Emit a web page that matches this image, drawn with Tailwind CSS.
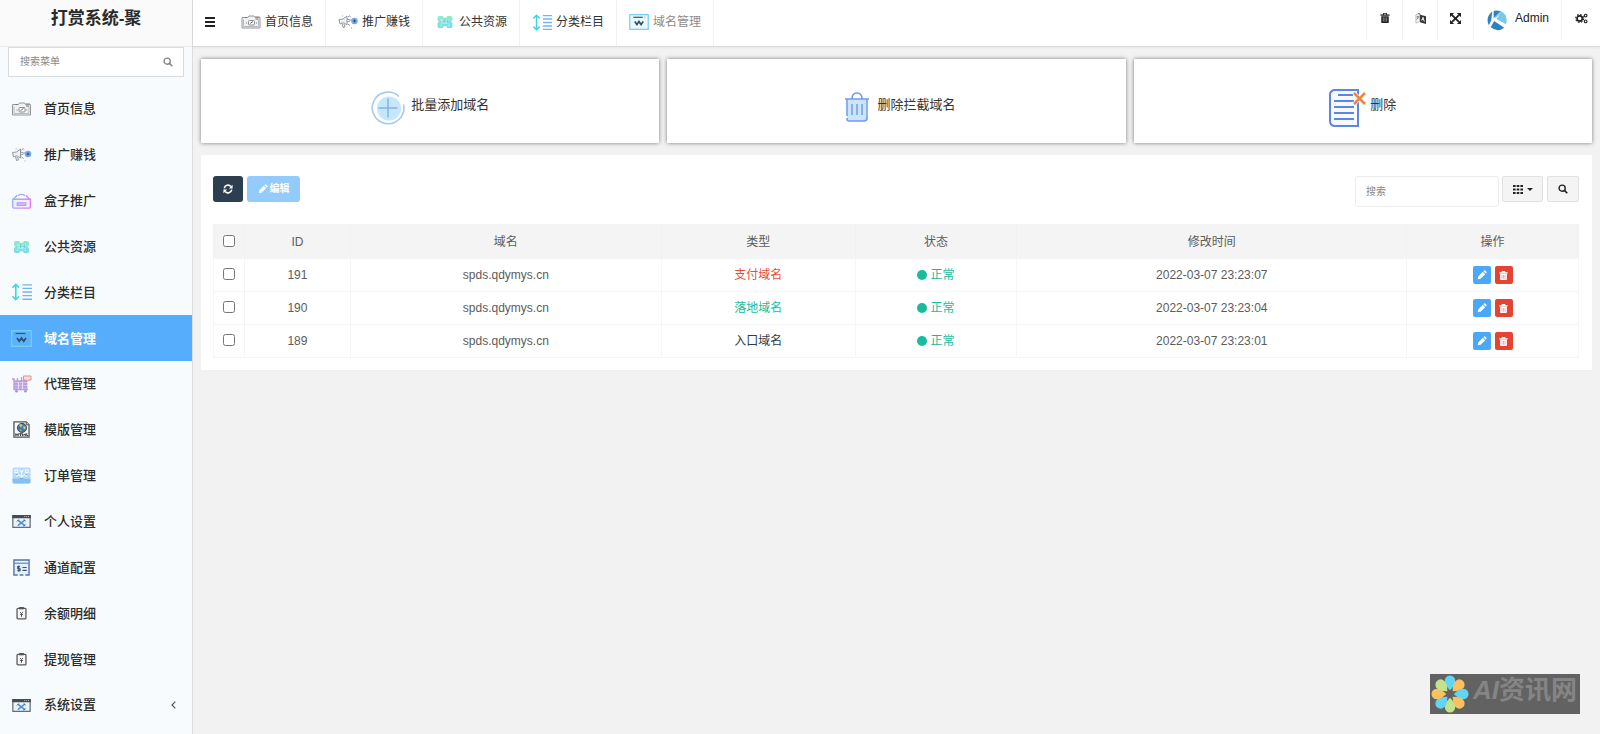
<!DOCTYPE html>
<html lang="zh-CN">
<head>
<meta charset="utf-8">
<meta name="viewport" content="width=device-width, initial-scale=1">
<title>打赏系统-聚</title>
<script src="https://cdn.jsdelivr.net/npm/@tailwindcss/browser@4"></script>
</head>
<body class="flex min-h-screen bg-[#f2f2f2] font-['Liberation_Sans','Noto_Sans_CJK_SC',sans-serif] text-xs text-[#333]">

<svg class="size-0 shrink-0" aria-hidden="true">
  <symbol id="i-home" viewBox="0 0 20 14">
    <path d="M1 2.500h6l1-1.500h5l1 1.500h5v10.500H1z" fill="#f1f1f2" stroke="#96989c"/>
    <path d="M2.500 4.500v7h15v-7M14 1.500h4.500" fill="none" stroke="#b9bbbf"/>
    <path d="M4 2.500h2M14.500 4h3" stroke="#6f7175"/>
    <rect x="7.500" y="5.500" width="6" height="4.500" rx="1" fill="#fff" stroke="#8b8d92"/>
    <path d="M9 8.500l3-2M5 8h.8M15 8h.8" stroke="#66686c"/>
  </symbol>
  <symbol id="i-promo" viewBox="0 0 20 16">
    <path d="M1 5.500l4-.5 4-3v9l-3-2H4l-2 1zM4 9.500l1 4 2-.5-1-3" fill="#eef0f2" stroke="#8b9199" stroke-width=".9"/>
    <path d="M9 5l3 1h3M9 8l3-1M10 3l2-1.500M10 10l2 1.500" fill="none" stroke="#8d949d"/>
    <circle cx="16.500" cy="7" r="3.300" fill="#7ba8ea"/>
    <path d="M15 7h3M16.500 5.500v3" stroke="#27539b"/>
    <path d="M4 2h1M13 14h1M12 3h1" stroke="#8fa7c9"/>
  </symbol>
  <linearGradient id="g-box" gradientUnits="userSpaceOnUse" x1="0" x2="22" y1="4" y2="16"><stop offset="0" stop-color="#86bdf8"/><stop offset=".6" stop-color="#c694f4"/><stop offset="1" stop-color="#ee72ec"/></linearGradient>
  <symbol id="i-box" viewBox="0 0 22 18">
    <path d="M1 7h20v8.500q0 1.500-1.500 1.500h-17Q1 17 1 15.500z" fill="#ece2fb" fill-opacity=".6" stroke="url(#g-box)" stroke-width="1.500"/>
    <path d="M2 7l4-4.500M20 7l-4-4.500M7 3q4-3 8 0" fill="none" stroke="url(#g-box)" stroke-width="1.500"/>
    <rect x="6" y="11" width="10" height="3" fill="#d5bbf6" stroke="#b692f1"/>
  </symbol>
  <linearGradient id="g-res" x1="0" x2="0" y1="0" y2="1"><stop offset="0" stop-color="#8eeccb"/><stop offset="1" stop-color="#7bd9ee"/></linearGradient>
  <symbol id="i-res" viewBox="0 0 18 15">
    <path d="M3 1h3.500l1 2h3l1-2H15q2 0 2 2v2.500L15.500 7 17 8.500V12q0 2-2 2h-3.500l-1-2h-3l-1 2H3q-2 0-2-2V8.500L2.500 7 1 5.500V3q0-2 2-2z" fill="url(#g-res)"/>
    <path d="M4 5.500h4M10 5.500h4M5 8.500h8M4 11h1.500M12.500 11H14" stroke="#d8fbf5"/>
    <path d="M8 4.500v4M12 4.500v4" stroke="#58cddb"/>
  </symbol>
  <symbol id="i-cat" viewBox="0 0 22 18">
    <path d="M5 1.500v15M1.500 4.500L5 1l3.500 3.500M1.500 13.500L5 17l3.500-3.500" fill="none" stroke="#3fd5e1" stroke-width="1.700"/>
    <path d="M12 1.500h10M12 5.200h10M12 9h10M12 12.800h10M12 16.500h10" stroke="#74b4ee" stroke-width="1.500"/>
  </symbol>
  <symbol id="i-domain" viewBox="0 0 21 17">
    <rect x=".7" y=".7" width="19.600" height="15.600" fill="#7ccdf5" fill-opacity=".16" stroke="#76cdf2" stroke-width="1.300"/>
    <path d="M4.500 3.500h10" stroke="#3a5877" stroke-width="1.300"/><path d="M16 3.500h1.500" stroke="#f08c70"/>
    <path d="M6 8l2.300 3.200L10.500 8l2.200 3.200L15 8" fill="none" stroke="#2d4c6d" stroke-width="1.700"/>
  </symbol>
  <symbol id="i-agent" viewBox="0 0 20 18">
    <rect x="3" y="6" width="12.500" height="8.500" fill="#cfbcec"/>
    <path d="M.5 4h2v10.500h14M3 6h13M3 9h13M3 12h13M6 3v3M10 2v4M13 4v2" fill="none" stroke="#b49bda" stroke-width="1.300"/>
    <path d="M7 7v7M11 7v7" stroke="#e9dff7"/>
    <circle cx="5" cy="16.300" r="1.300" fill="#a98fd2"/><circle cx="14" cy="16.300" r="1.300" fill="#a98fd2"/>
    <path d="M12 1h7.500v4H17l-1 1.500L15 5h-3z" fill="#fbdedd" stroke="#e08f94"/>
  </symbol>
  <symbol id="i-tpl" viewBox="0 0 18 18">
    <path d="M1 1h13l3 3v13H1z" fill="#f7f7f5" stroke="#55575a" stroke-width="1.400"/>
    <path d="M14 1v3h3" fill="#ddd" stroke="#55575a"/>
    <circle cx="9.500" cy="7.300" r="4.800" fill="#3e7cb8" stroke="#30404c"/>
    <path d="M6.500 4l2.500-1 1 2-2 2zM11 5l2.500 1-.5 3-2-1zM7 9l2 .5-.5 2z" fill="#e4c454"/>
    <path d="M3 13v3M5.500 13v3M3 14.500h2.500M6.500 13.500h3M8 13.500V16M10 16v-2.500l1.500 1.500 1.500-1.500V16M14.500 13v2.500h1.500" fill="none" stroke="#333"/>
  </symbol>
  <symbol id="i-order" viewBox="0 0 20 18">
    <rect x=".5" y=".5" width="19" height="17" rx="2" fill="#b3d9f8"/>
    <path d="M.5 12.500h19v3q0 2-2 2h-15q-2 0-2-2z" fill="#86c0f2"/>
    <path d="M3 3h3v3H3zM8 3l2 3 2-3M14 3h3v3h-3zM4 10l3-2 3 3 3-3 3 2M10 6v5" fill="none" stroke="#eff9ff" stroke-width="1.200"/>
    <path d="M4 8h2M14 8h2M8 12h4" stroke="#69abe6"/>
  </symbol>
  <symbol id="i-set" viewBox="0 0 20 14">
    <rect x=".7" y=".7" width="18.600" height="12.600" fill="#eaf3fb" stroke="#62676f" stroke-width="1.300"/>
    <path d="M0 0h20v3.500H0z" fill="#454a53"/><path d="M13 1.700h1M15 1.700h1M17 1.700h1" stroke="#ccc"/>
    <path d="M6 5.500l7.500 6M13.500 5.500l-7.500 6" stroke="#4e92d6" stroke-width="1.800"/>
    <path d="M5 7l2-2M12.500 5l2 1.500M12 12l2.500-1.500" stroke="#35699f"/>
  </symbol>
  <symbol id="i-chan" viewBox="0 0 18 18">
    <path d="M1 1h16v16H1z" fill="#e5f0fb"/><path d="M5 17H1V1h16v16h-4M7 17h4" fill="none" stroke="#5675a3" stroke-width="1.500"/>
    <path d="M1 4.500h16" stroke="#5e91cb" stroke-width="1.300"/>
    <path d="M7.500 8H5v2.300h2.500v2.200H4.500M6.200 7v6.500M10 9h4.500M10 12h4.500" fill="none" stroke="#36547e" stroke-width="1.200"/>
  </symbol>
  <symbol id="i-bal" viewBox="0 0 12 14">
    <rect x="1.200" y="1.500" width="9.600" height="11.300" rx="1" fill="#f4f4f4" stroke="#5a5a5a" stroke-width="1.400"/>
    <path d="M3.500 0h5v2.500h-5z" fill="#555"/><path d="M4.500 5.500L6 7l1.500-1.500M4.500 8h3M6 7v3.500" fill="none" stroke="#444"/>
  </symbol>
  <symbol id="i-search" viewBox="0 0 14 14"><circle cx="5.800" cy="5.800" r="4.300" fill="none" stroke="currentColor" stroke-width="1.900"/><path d="M9 9l4 4" stroke="currentColor" stroke-width="2.300"/></symbol>
  <symbol id="i-trash" viewBox="0 0 12 12"><path d="M4 0h4l.8 1.700H11.500V3.200H.5V1.700h2.700zM1.500 3.800h9V11q0 1-1 1h-7q-1 0-1-1zM4.600 1.700h2.800L7 1H5z" fill="currentColor"/><path d="M4 5.300v5M6 5.300v5M8 5.300v5" stroke="#fff" stroke-opacity=".65" stroke-width=".8"/></symbol>
  <symbol id="i-trash-light" viewBox="0 0 12 12"><path d="M4 0h4l.8 1.700H11.500V3.200H.5V1.700h2.700zM1.500 3.800h9V11q0 1-1 1h-7q-1 0-1-1z" fill="#fff"/><path d="M4 5.300v5M6 5.300v5M8 5.300v5" stroke="#e64433" stroke-opacity=".6" stroke-width=".9"/></symbol>
  <symbol id="i-pencil" viewBox="0 0 12 12"><path d="M.8 11.200l.7-3.500L7 2.200l2.800 2.800-5.500 5.500zM7.700 1.500l.8-.8q.7-.6 1.400 0l1.400 1.400q.6.700 0 1.400l-.8.800z" fill="currentColor"/></symbol>
</svg>

<aside class="flex w-[193px] shrink-0 flex-col border-r border-[#d9dde0] bg-[#f7fbfe]">
  <h1 class="h-[47px] border-b border-[#ebebeb] bg-[#fafafa] pt-[5px] text-center text-[17px] leading-7 font-bold text-[#2a2a2a]">打赏系统-聚</h1>
  <form class="mx-2 flex h-[30px] items-center border border-[#d8dcdf] bg-white pr-2.5 pl-[11px]">
    <input type="text" aria-label="搜索菜单" placeholder="搜索菜单" class="min-w-0 flex-1 bg-transparent text-[10px] outline-none placeholder:text-[#888]">
    <button type="button" aria-label="搜索" class="text-[#888]"><svg class="size-2.5"><use href="#i-search"/></svg></button>
  </form>
  <nav class="mt-[9px] flex min-h-[642px] flex-col text-[13px] font-medium text-[#2b2b2b]">
    <a href="#" class="flex flex-1 items-center pl-[11px]"><svg class="h-3.5 w-[21px]"><use href="#i-home"/></svg><span class="ml-3">首页信息</span></a>
    <a href="#" class="flex flex-1 items-center pl-[11px]"><svg class="h-4 w-[21px]"><use href="#i-promo"/></svg><span class="ml-3">推广赚钱</span></a>
    <a href="#" class="flex flex-1 items-center pl-[11px]"><svg class="h-4 w-[21px]"><use href="#i-box"/></svg><span class="ml-3">盒子推广</span></a>
    <a href="#" class="flex flex-1 items-center pl-[11px]"><svg class="h-3.5 w-[21px]"><use href="#i-res"/></svg><span class="ml-3">公共资源</span></a>
    <a href="#" class="flex flex-1 items-center pl-[11px]"><svg class="h-[18px] w-[21px]"><use href="#i-cat"/></svg><span class="ml-3">分类栏目</span></a>
    <a href="#" aria-current="page" class="flex flex-1 items-center bg-[#55adfb] pl-[11px] font-bold text-white"><svg class="h-[17px] w-[21px]"><use href="#i-domain"/></svg><span class="ml-3">域名管理</span></a>
    <a href="#" class="flex flex-1 items-center pl-[11px]"><svg class="h-[18px] w-[21px]"><use href="#i-agent"/></svg><span class="ml-3">代理管理</span></a>
    <a href="#" class="flex flex-1 items-center pl-[11px]"><svg class="h-[17px] w-[21px]"><use href="#i-tpl"/></svg><span class="ml-3">模版管理</span></a>
    <a href="#" class="flex flex-1 items-center pl-[11px]"><svg class="h-[17px] w-[21px]"><use href="#i-order"/></svg><span class="ml-3">订单管理</span></a>
    <a href="#" class="flex flex-1 items-center pl-[11px]"><svg class="h-[13px] w-[21px]"><use href="#i-set"/></svg><span class="ml-3">个人设置</span></a>
    <a href="#" class="flex flex-1 items-center pl-[11px]"><svg class="h-[17px] w-[21px]"><use href="#i-chan"/></svg><span class="ml-3">通道配置</span></a>
    <a href="#" class="flex flex-1 items-center pl-[11px]"><svg class="h-[13px] w-[21px]"><use href="#i-bal"/></svg><span class="ml-3">余额明细</span></a>
    <a href="#" class="flex flex-1 items-center pl-[11px]"><svg class="h-[13px] w-[21px]"><use href="#i-bal"/></svg><span class="ml-3">提现管理</span></a>
    <a href="#" class="flex flex-1 items-center pr-4 pl-[11px]"><svg class="h-[13px] w-[21px]"><use href="#i-set"/></svg><span class="ml-3">系统设置</span>
      <svg class="ml-auto h-2 w-[5px]" viewBox="0 0 5 8"><path d="M4.300.7L1 4l3.300 3.300" fill="none" stroke="#555" stroke-width="1.200"/></svg></a>
  </nav>
</aside>

<div class="flex min-w-0 flex-1 flex-col">
  <header class="flex h-[47px] border-b border-[#dcdcdc] bg-white shadow-xs">
    <button type="button" aria-label="菜单" class="flex w-9 items-center pb-0.5 pl-3"><svg class="h-2.5 w-2.5" viewBox="0 0 10 10"><path d="M0 1h10M0 5h10M0 9h10" stroke="#222" stroke-width="1.800"/></svg></button>
    <nav class="flex text-[#333]">
      <a href="#" class="flex items-center gap-1 border-r border-[#f1f1f1] px-3 pb-0.5"><svg class="h-3.5 w-5"><use href="#i-home"/></svg>首页信息</a>
      <a href="#" class="flex items-center gap-1 border-r border-[#f1f1f1] px-3 pb-0.5"><svg class="h-4 w-5"><use href="#i-promo"/></svg>推广赚钱</a>
      <a href="#" class="flex items-center gap-1 border-r border-[#f1f1f1] px-3 pb-0.5"><svg class="h-3.5 w-5"><use href="#i-res"/></svg>公共资源</a>
      <a href="#" class="flex items-center gap-1 border-r border-[#f1f1f1] px-3 pb-0.5"><svg class="h-[17px] w-5"><use href="#i-cat"/></svg>分类栏目</a>
      <a href="#" class="flex items-center gap-1 border-r border-[#f1f1f1] px-3 pb-0.5 text-[#8c8c8c]"><svg class="h-4 w-5"><use href="#i-domain"/></svg>域名管理</a>
    </nav>
    <div class="ml-auto flex h-10 text-[#222]">
      <button type="button" aria-label="清除缓存" class="flex w-9 items-center justify-center border-l border-[#f1f1f1] pb-1"><svg class="size-2.5"><use href="#i-trash"/></svg></button>
      <button type="button" aria-label="语言" class="flex w-[35px] items-center justify-center border-l border-[#f1f1f1] pb-1"><svg class="h-[11px] w-[11px]" viewBox="0 0 12 12"><path d="M1 2l4-1.500v9L1 11z" fill="#f4f4f4" stroke="#aaa" stroke-width=".8"/><path d="M2 4h2M2 7l2-3M3 0l3 1.500" stroke="#555" fill="none" stroke-width=".9"/><path d="M5.500 2L12 3.500V12L5.500 10z" fill="#333"/><path d="M7.300 8.300L8.700 4.500l1.500 5M7.700 7.200h2" stroke="#fff" fill="none" stroke-width=".9"/></svg></button>
      <button type="button" aria-label="全屏" class="flex w-9 items-center justify-center border-l border-[#f1f1f1] pb-1"><svg class="size-[11px]" viewBox="0 0 12 12"><path d="M0 0h4.500L0 4.500zM12 0v4.500L7.500 0zM0 12V7.500L4.500 12zM12 12H7.500L12 7.500z" fill="#222"/><path d="M2 2l8 8M10 2l-8 8" stroke="#222" stroke-width="2"/></svg></button>
      <a href="#" class="flex w-[88px] items-center border-l border-[#f1f1f1] pl-3"><svg class="size-[21px]" viewBox="0 0 22 22"><path d="M9 .3A10.800 10.800 0 0 1 21 14.500L13.500 9.500 19 3.500 17.500 2 9 9z" fill="#7bc7e6"/><path d="M16.500 1.500L21 6V15L11 9.500z" fill="#7bc7e6"/><path d="M6.500 1.500L5.500 11 3 16Q-1 8 6.500 1.500zM8 1h7L8 8.500zM5 18l3.500-6.500Q14 15 19 18.500 12 24 5 18z" fill="#2f80c4"/></svg><span class="ml-2 pb-1">Admin</span></a>
      <button type="button" aria-label="设置" class="flex w-[39px] items-center justify-center border-l border-[#f1f1f1] pb-1"><svg class="h-[11px] w-[13px]" viewBox="0 0 14 12"><circle cx="5" cy="6" r="2.900" fill="none" stroke="#222" stroke-width="1.800"/><circle cx="5" cy="6" r="4.300" fill="none" stroke="#222" stroke-width="1.300" stroke-dasharray="1.700 1.677"/><circle cx="11.500" cy="2.800" r="1.500" fill="none" stroke="#222" stroke-width="1.200"/><circle cx="11.500" cy="9.200" r="1.500" fill="none" stroke="#222" stroke-width="1.200"/></svg></button>
    </div>
  </header>

  <main class="px-2 pt-3">
    <div class="grid grid-cols-3 gap-2 text-[13px] text-[#333]">
      <button type="button" class="flex h-[84px] items-center justify-center gap-1.5 bg-white shadow-[0_0_4px_rgba(0,0,0,0.5)]"><svg class="mt-3 h-[35px] w-[34px]" viewBox="0 0 34 34"><circle cx="18" cy="18" r="12" fill="#c5e6fc"/><path d="M28 6A15.800 15.800 0 1 0 32.500 14" fill="none" stroke="#a5c9ef" stroke-width="1.600"/><path d="M17 8v19M7.500 17.500h19" stroke="#7fb4e8" stroke-width="1.500"/></svg><span class="pt-2">批量添加域名</span></button>
      <button type="button" class="flex h-[84px] items-center justify-center gap-2 bg-white pl-2 shadow-[0_0_4px_rgba(0,0,0,0.5)]"><svg class="mt-3 h-[30px] w-6" viewBox="0 0 24 30"><path d="M2 7h20v22H2z" fill="#cde4fd"/><path d="M2 7v17M2 26v1q0 2 2 2h15q3 0 3-3V7" fill="none" stroke="#6d9cef" stroke-width="1.500"/><path d="M0 7h24M7 7q0-6 5-6t5 6" fill="none" stroke="#6d9cef" stroke-width="1.600"/><path d="M7 12v11M12 12v11M17 12v11" stroke="#6d9cef" stroke-width="1.500"/></svg><span class="pt-2">删除拦截域名</span></button>
      <button type="button" class="flex h-[84px] items-center justify-center gap-1 bg-white shadow-[0_0_4px_rgba(0,0,0,0.5)]"><svg class="mt-3.5 h-[39px] w-[37px]" viewBox="0 0 37 39"><path d="M5 1h24v36H5q-4-1-4-5V6q0-4 4-5z" fill="#f6f9ff" stroke="#5d86e4" stroke-width="2"/><path d="M9 6h15M5 12h20M5 18h20M5 24h20M5 30h20" stroke="#5d86e4" stroke-width="2"/><path d="M25 4l11 11M36 4L25 15" stroke="#fff" stroke-width="4"/><path d="M25 4l11 11M36 4L25 15" stroke="#ee8540" stroke-width="2.600"/></svg><span class="pt-2">删除</span></button>
    </div>

    <section class="mt-3 bg-white pt-[21px] pr-[13px] pb-3 pl-3">
      <div class="flex items-start">
        <button type="button" aria-label="刷新" class="flex h-[26px] w-[30px] items-center justify-center rounded-[3px] bg-[#2c3e50] text-white"><svg class="size-2.5" viewBox="0 0 12 12"><path d="M1.500 5.200A4.600 4.600 0 0 1 9.500 3M10.500 6.800A4.600 4.600 0 0 1 2.500 9" fill="none" stroke="currentColor" stroke-width="1.900"/><path d="M11.500.8v4.500H7zM.5 11.200V6.700H5z" fill="currentColor"/></svg></button>
        <button type="button" disabled class="ml-1 flex h-[26px] w-[53px] items-center justify-center gap-0.5 rounded-[3px] bg-[#93cbfd] text-[10px] font-bold text-white"><svg class="size-2.5"><use href="#i-pencil"/></svg>编辑</button>
        <input type="text" aria-label="搜索" placeholder="搜索" class="ml-auto h-[31px] w-36 rounded-[3px] border border-[#ededed] px-2.5 text-[10px] outline-none placeholder:text-[#888]">
        <button type="button" aria-label="列" class="ml-[3px] flex h-[26px] w-[41px] items-center justify-center gap-1 rounded-xs border border-[#e1e1e1] bg-[#f4f4f4] text-[#222]"><svg class="h-[9px] w-2.5" viewBox="0 0 10 9"><path d="M0 1h2.600M3.700 1h2.600M7.400 1H10M0 4.500h2.600M3.700 4.500h2.600M7.400 4.500H10M0 8h2.600M3.700 8h2.600M7.400 8H10" stroke="currentColor" stroke-width="2"/></svg><svg class="h-[3px] w-1.5" viewBox="0 0 6 3"><path d="M0 0h6L3 3z" fill="currentColor"/></svg></button>
        <button type="button" aria-label="查找" class="ml-1 flex h-[26px] w-8 items-center justify-center rounded-xs border border-[#e1e1e1] bg-[#f4f4f4] text-[#222]"><svg class="size-2.5"><use href="#i-search"/></svg></button>
      </div>

      <table class="mt-[17px] w-full table-fixed border-collapse text-center text-[#5c5c5c] [&_td]:border [&_td]:border-[#f5f5f5] [&_td]:pt-px [&_th]:border-x [&_th]:border-[#f1f1f1] [&_th]:pt-0.5 [&_th]:font-normal">
        <colgroup><col class="w-[31px]"><col class="w-[7.76%]"><col class="w-[22.77%]"><col class="w-[14.2%]"><col class="w-[11.86%]"><col class="w-[28.55%]"><col></colgroup>
        <thead><tr class="h-[34px] border-b border-[#dedede] bg-[#f4f4f4]">
          <th><input type="checkbox" aria-label="全选" class="mx-auto mb-0.5 block size-3"></th><th>ID</th><th>域名</th><th>类型</th><th>状态</th><th>修改时间</th><th>操作</th>
        </tr></thead>
        <tbody>
          <tr class="h-[33px]"><td><input type="checkbox" aria-label="选择 191" class="mx-auto mb-0.5 block size-3"></td><td>191</td><td>spds.qdymys.cn</td><td class="text-[#e74c3c]">支付域名</td>
            <td class="text-[#18bc9c]"><span class="inline-flex items-center gap-[3px]"><i class="size-2.5 rounded-full bg-[#18bc9c]"></i>正常</span></td><td>2022-03-07 23:23:07</td>
            <td><div class="flex justify-center gap-1 text-white"><button type="button" aria-label="编辑" class="flex size-[18px] items-center justify-center rounded-xs bg-[#4aa8fb]"><svg class="size-2.5"><use href="#i-pencil"/></svg></button><button type="button" aria-label="删除" class="flex size-[18px] items-center justify-center rounded-xs bg-[#e64433]"><svg class="size-[9px]"><use href="#i-trash-light"/></svg></button></div></td></tr>
          <tr class="h-[33px]"><td><input type="checkbox" aria-label="选择 190" class="mx-auto mb-0.5 block size-3"></td><td>190</td><td>spds.qdymys.cn</td><td class="text-[#18bc9c]">落地域名</td>
            <td class="text-[#18bc9c]"><span class="inline-flex items-center gap-[3px]"><i class="size-2.5 rounded-full bg-[#18bc9c]"></i>正常</span></td><td>2022-03-07 23:23:04</td>
            <td><div class="flex justify-center gap-1 text-white"><button type="button" aria-label="编辑" class="flex size-[18px] items-center justify-center rounded-xs bg-[#4aa8fb]"><svg class="size-2.5"><use href="#i-pencil"/></svg></button><button type="button" aria-label="删除" class="flex size-[18px] items-center justify-center rounded-xs bg-[#e64433]"><svg class="size-[9px]"><use href="#i-trash-light"/></svg></button></div></td></tr>
          <tr class="h-[33px]"><td><input type="checkbox" aria-label="选择 189" class="mx-auto mb-0.5 block size-3"></td><td>189</td><td>spds.qdymys.cn</td><td class="text-[#2c3e50]">入口域名</td>
            <td class="text-[#18bc9c]"><span class="inline-flex items-center gap-[3px]"><i class="size-2.5 rounded-full bg-[#18bc9c]"></i>正常</span></td><td>2022-03-07 23:23:01</td>
            <td><div class="flex justify-center gap-1 text-white"><button type="button" aria-label="编辑" class="flex size-[18px] items-center justify-center rounded-xs bg-[#4aa8fb]"><svg class="size-2.5"><use href="#i-pencil"/></svg></button><button type="button" aria-label="删除" class="flex size-[18px] items-center justify-center rounded-xs bg-[#e64433]"><svg class="size-[9px]"><use href="#i-trash-light"/></svg></button></div></td></tr>
        </tbody>
      </table>
    </section>
  </main>
</div>

<div class="fixed right-5 bottom-5 flex h-10 w-[150px] items-center overflow-hidden bg-[#626262] text-[#858585]">
  <svg class="ml-px size-[38px] shrink-0" viewBox="-20 -20 40 40">
    <defs><path id="petal" d="M0-4Q-6-10-5.500-14A5.500 5.500 0 0 1 5.500-14Q6-10 0-4z"/></defs>
    <use href="#petal" fill="#62d5f5"/><use href="#petal" fill="#fbc15e" transform="rotate(45)"/><use href="#petal" fill="#62d5f5" transform="rotate(90)"/><use href="#petal" fill="#fbc15e" transform="rotate(135)"/><use href="#petal" fill="#c5e28a" transform="rotate(180)"/><use href="#petal" fill="#62d5f5" transform="rotate(225)"/><use href="#petal" fill="#fbc15e" transform="rotate(270)"/><use href="#petal" fill="#c5e28a" transform="rotate(315)"/>
  </svg>
  <span class="ml-1 pb-2 text-[26px] leading-8 font-bold whitespace-nowrap"><i>AI</i>资讯网</span>
</div>
</body>
</html>
